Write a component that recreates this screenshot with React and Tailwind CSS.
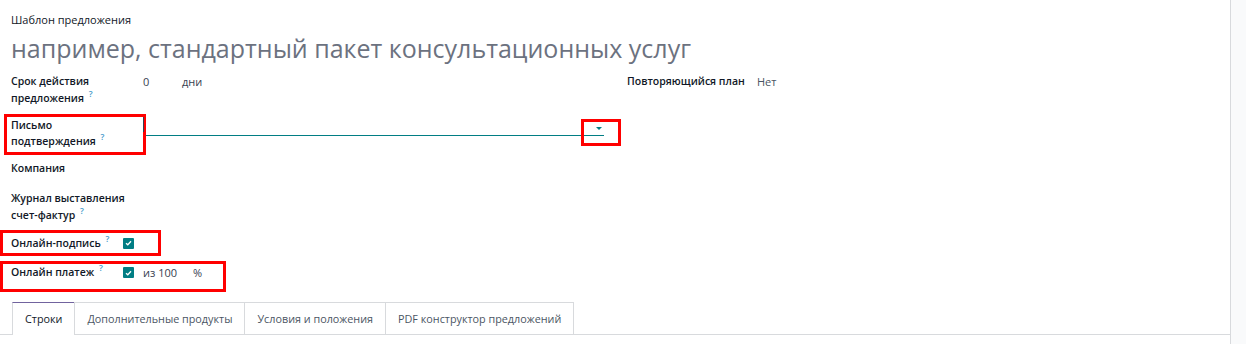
import React from "react";

const Help = () => (
  <span className="relative -top-[5px] ml-[2px] inline-block align-baseline text-[8.5px] font-semibold leading-none text-[#3a97c9]">?</span>
);

const Check = () => (
  <span className="inline-flex h-[11px] w-[11px] items-center justify-center rounded-[1px] bg-[#017e84]">
    <svg width="7" height="6" viewBox="0 0 7 6" fill="none">
      <path d="M1 3.2 L2.8 4.8 L6 1.2" stroke="white" strokeWidth="1.3" />
    </svg>
  </span>
);

export default function App() {
  const tabs = [
    "Строки",
    "Дополнительные продукты",
    "Условия и положения",
    "PDF конструктор предложений",
  ];
  const label = "text-[10.5px] font-semibold leading-[17px] text-[#111827]";
  const value = "text-[11px] leading-[17px] text-[#374151]";
  return (
    <div
      className="flex h-[344px] w-[1246px] bg-[#f9fafb] text-[12px] text-[#212529]"
      style={{ fontFamily: '"Open Sans", sans-serif' }}
    >
      <div className="flex w-[1231px] flex-col border-r border-[#d8dadd] bg-white">
        <div className="pl-[11px] pt-[12px]">
          <div className="text-[11px] leading-[16px] text-[#111827]">Шаблон предложения</div>
          <div className="mt-[4px] text-[25px] leading-[32px] text-[#6c727f]">
            например, стандартный пакет консультационных услуг
          </div>
        </div>

        <div className="flex pl-[11px] pt-[9px]">
          <div className="flex w-[616px] flex-col">
            <div className="flex">
              <div className={`w-[132px] ${label}`}>
                Срок действия предложения <Help />
              </div>
              <div className={`flex ${value}`}>
                <span className="w-[39px]">0</span>
                <span>дни</span>
              </div>
            </div>

            <div className="relative mt-[7px] flex">
              <div className={`-ml-[7px] w-[142px] border-[3px] border-[#ff0000] px-[4px] pt-0 pb-[3px] ${label}`}>
                <div className="leading-[16px]">
                  Письмо подтверждения <Help />
                </div>
              </div>
              <div className="relative mt-[3px] flex h-[19px] w-[458px] items-start border-b border-[#017e84]">
                <span className="-ml-[3px] h-[15px] w-[1px] bg-[#374151]" />
                <span className="absolute right-[2px] top-[10px] h-0 w-0 border-x-[3px] border-t-[3px] border-x-transparent border-t-[#017e84]" />
              </div>
              <div className="absolute left-[570px] top-[5px] h-[27px] w-[40px] border-[3px] border-[#ff0000]" />
            </div>

            <div className={`mt-[5px] ${label}`}>Компания</div>

            <div className={`mt-[13px] w-[132px] ${label}`}>
              Журнал выставления счет-фактур <Help />
            </div>

            <div className="mt-[6px] -ml-[11px] flex h-[26px] w-[161px] items-center border-[3px] border-[#ff0000] pl-[8px]">
              <span className={`w-[112px] ${label}`}>
                Онлайн-подпись <Help />
              </span>
              <Check />
            </div>

            <div className="mt-[5px] -ml-[11px] flex h-[31px] w-[226px] items-start border-[3px] border-[#ff0000] pl-[8px] pt-0">
              <div className="flex h-[17px] items-center">
                <span className={`w-[112px] ${label}`}>
                  Онлайн платеж <Help />
                </span>
                <Check />
                <span className={`ml-[9px] ${value}`}>из 100</span>
                <span className={`ml-[16px] ${value}`}>%</span>
              </div>
            </div>
          </div>

          <div className="flex">
            <div className={`w-[130px] ${label}`}>Повторяющийся план</div>
            <div className="text-[11px] leading-[17px] text-[#4b5563]">Нет</div>
          </div>
        </div>

        <div className="mt-[10px] flex border-b border-[#d8dadd] pl-[12px]">
          {tabs.map((t, i) => (
            <div
              key={t}
              className={
                i === 0
                  ? "-mb-px border-x border-t border-x-[#d8dadd] border-t-[#71639e] bg-white px-[12px] py-[8px] text-[10.8px] leading-[15px] text-[#111827]"
                  : "-ml-px border border-b-0 border-[#d8dadd] px-[12px] py-[8px] text-[10.8px] leading-[15px] text-[#4b5563]"
              }
            >
              {t}
            </div>
          ))}
        </div>
      </div>
    </div>
  );
}
